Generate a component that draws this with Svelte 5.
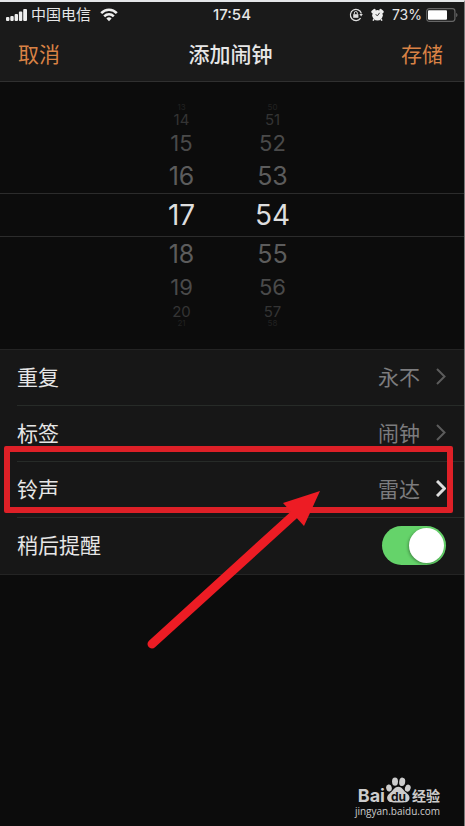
<script lang="ts">
  const depths = ["edge", "far", "mid", "near", "current", "near", "mid", "far", "edge"];

  let hour = $state(17);
  let minute = $state(54);
  let snooze = $state(true);

  const rows = [
    { label: "重复", value: "永不" },
    { label: "标签", value: "闹钟" },
    { label: "铃声", value: "雷达", marked: true },
  ];

  function around(value: number, count: number) {
    return depths.map((depth, i) => ({
      depth,
      n: (value + i - 4 + count) % count,
    }));
  }

  const hours = $derived(around(hour, 24));
  const minutes = $derived(around(minute, 60));
</script>

<div class="screen">
  <header>
    <div class="status">
      <div class="carrier">
        <svg width="22" height="14" viewBox="0 0 22 14" fill="#eee" aria-hidden="true">
          <rect x="0" y="9" width="3.4" height="4" rx="1" />
          <rect x="4.3" y="8" width="3.4" height="5" rx="1" />
          <rect x="8.600" y="6" width="3.4" height="7" rx="1" />
          <rect x="12.9" y="3.500" width="3.4" height="9.500" rx="1" />
          <rect x="17.2" y="1" width="3.800" height="12" rx="1" />
        </svg>
        <span>中国电信</span>
        <svg class="wifi" width="18" height="14" viewBox="0 0 18 14" fill="none" stroke="#eee" stroke-width="2.5" aria-hidden="true">
          <path d="M1.2 5.2C5.5.6 12.5.6 16.8 5.2" />
          <path d="M4.2 8.4c2.7-2.8 6.9-2.8 9.6 0" />
          <path d="M6.4 10.4c1.5-1.5 3.7-1.5 5.2 0L9 13.2z" fill="#eee" stroke="none" />
        </svg>
      </div>
      <span class="clock">17:54</span>
      <div class="indicators">
        <svg width="14" height="14" viewBox="0 0 14 14" fill="none" stroke="#ddd" aria-hidden="true">
          <path d="M11.6 10.2A5.6 5.6 0 1 1 12.4 5.5" stroke-width="1.2" />
          <path d="M10.4 6h3.4l-1.7 2.6z" fill="#ddd" stroke="none" />
          <rect x="4.2" y="6.2" width="5.2" height="3.6" fill="#ddd" stroke="none" />
          <path d="M5.3 6.3V5a1.5 1.5 0 0 1 3 0v1.3" />
        </svg>
        <svg width="13" height="14" viewBox="0 0 13 14" aria-hidden="true">
          <path d="M1.6 3.800L3.400 2.200M11.400 3.800L9.600 2.200" stroke="#eee" stroke-width="2.600" stroke-linecap="round" />
          <circle cx="6.5" cy="7.2" r="5.300" fill="#eee" />
          <path d="M3 11.2l-1 1.400M10 11.2l1 1.400" stroke="#eee" stroke-width="1.6" />
          <path d="M4.600 6.600l2 1L8.600 4.800" fill="none" stroke="#333" stroke-width="1" />
        </svg>
        <span>73%</span>
        <svg width="32" height="14" viewBox="0 0 32 14" aria-hidden="true">
          <rect x=".7" y=".7" width="28.2" height="12.6" rx="2.5" fill="none" stroke="#666" stroke-width="1.2" />
          <rect x="2" y="2.2" width="19" height="9.6" rx="1" fill="#fff" />
          <path d="M30.300 5v4c1.4-.4 1.4-3.6 0-4z" fill="#777" />
        </svg>
      </div>
    </div>
    <nav>
      <button class="action">取消</button>
      <h1>添加闹钟</h1>
      <button class="action save">存储</button>
    </nav>
  </header>

  <section class="picker" aria-label="时间">
    <div class="wheel">
      {#each hours as h, i}
        <div class="line {h.depth}">
          <button onclick={() => (hour = h.n)}>{String(h.n).padStart(2, "0")}</button>
          <button onclick={() => (minute = minutes[i].n)}>{String(minutes[i].n).padStart(2, "0")}</button>
        </div>
      {/each}
    </div>
  </section>

  <ul>
    {#each rows as row}
      <li>
        <button class="row" class:marked={row.marked}>
          <span>{row.label}</span>
          <span class="value">{row.value}</span>
          <svg class="chevron" width="10" height="17" viewBox="0 0 10 17" fill="none" stroke="currentColor" aria-hidden="true">
            <path d="M1 1l7.5 7.5L1 16" />
          </svg>
        </button>
        {#if row.marked}
          <div class="frame"></div>
          <svg class="arrow" width="180" height="164" viewBox="0 0 180 164" aria-hidden="true">
            <path d="M8 156L152 25" stroke="#ed1c24" stroke-width="9" stroke-linecap="round" />
            <path d="M139 15L176 3L160 38Z" fill="#ed1c24" />
          </svg>
        {/if}
      </li>
    {/each}
    <li>
      <label class="row">
        <span>稍后提醒</span>
        <input type="checkbox" role="switch" bind:checked={snooze} />
      </label>
    </li>
  </ul>

  <footer>
    <div class="brand">
      <span class="bai">Bai</span>
      <span class="paw">
        <svg width="25" height="26" viewBox="0 0 25 26" aria-hidden="true">
          <g fill="#ccc">
            <ellipse cx="3" cy="11" rx="2.8" ry="3.6" transform="rotate(-12 3 11)" />
            <ellipse cx="9" cy="4.600" rx="3" ry="4.2" />
            <ellipse cx="16.2" cy="4.800" rx="3" ry="4.2" transform="rotate(8 16.2 4.800)" />
            <ellipse cx="21.8" cy="11.2" rx="2.8" ry="3.6" transform="rotate(18 21.8 11.2)" />
            <path d="M12.3 9.800c3.400 0 4.600 3 6.800 4.900 2.600 2.300 5.200 4 4.300 7.400-1 3.800-4.800 3.400-11 3.400S2.400 25.900 1.300 22.100c-.9-3.400 1.700-5.100 4.200-7.400 2.200-1.900 3.400-4.900 6.800-4.900z" />
          </g>
        </svg>
        <span class="du">du</span>
      </span>
      <span class="jing">经验</span>
    </div>
    <div class="url">jingyan.baidu.com</div>
  </footer>
</div>

<style>
  :global(body) {
    background: #0c0c0c;
  }
  .screen {
    box-sizing: border-box;
    display: flex;
    flex-direction: column;
    min-height: 100vh;
    border-top: 2px solid #e4e6e8;
    border-right: 1px solid #777;
    background: #0c0c0c;
    color: #e6e6e6;
    font-family: Inter, "Noto Sans CJK SC", sans-serif;
    font-size: 21px;
  }
  button {
    padding: 0;
    border: none;
    background: none;
    color: inherit;
    font: inherit;
    cursor: pointer;
  }
  header {
    background: #1a1a1a;
    border-bottom: 1px solid #303030;
  }
  .status {
    display: grid;
    grid-template-columns: 1fr auto 1fr;
    align-items: center;
    height: 26px;
    padding: 0 6px;
    font-size: 15px;
    line-height: 24px;
  }
  .carrier,
  .indicators {
    display: flex;
    align-items: center;
  }
  .carrier {
    gap: 3px;
  }
  .wifi {
    margin-left: 6px;
  }
  .clock {
    font-weight: 500;
  }
  .indicators {
    justify-content: flex-end;
    gap: 8px;
  }
  .indicators span {
    margin-right: -4px;
    font-size: 14px;
  }
  nav {
    box-sizing: border-box;
    display: grid;
    grid-template-columns: 1fr auto 1fr;
    align-items: center;
    height: 53px;
    padding: 0 21px 4px 18px;
  }
  .action {
    justify-self: start;
    color: #d98245;
  }
  .save {
    justify-self: end;
  }
  h1 {
    margin: 0;
    font-size: 21px;
    font-weight: 500;
  }
  .picker {
    padding: 21px 0 22px;
  }
  .line {
    display: grid;
    grid-template-columns: 60px 60px;
    justify-content: center;
    align-items: center;
    gap: 31px;
    padding-right: 10px;
  }
  .line button {
    line-height: 1;
  }
  .current {
    height: 42px;
    border-top: 1px solid #2c2c2c;
    border-bottom: 1px solid #2c2c2c;
    color: #dedede;
    font-size: 28px;
  }
  .near {
    height: 34px;
    color: #5c5c5c;
    font-size: 25px;
  }
  .mid {
    height: 32px;
    color: #4a4a4a;
    font-size: 22px;
  }
  .far {
    height: 16px;
    color: #343434;
    font-size: 15px;
  }
  .edge {
    height: 8px;
    color: #222;
    font-size: 8px;
  }
  ul {
    margin: 0;
    padding: 0;
    list-style: none;
    background: #171717;
    border-top: 1px solid #242424;
    border-bottom: 1px solid #242424;
  }
  li {
    position: relative;
    padding-left: 17px;
  }
  .row {
    box-sizing: border-box;
    display: flex;
    align-items: center;
    width: 100%;
    height: 56px;
    padding: 0 18px 2px 0;
    text-align: left;
  }
  .row span {
    padding-bottom: 2px;
  }
  li:not(:last-child) .row {
    border-bottom: 1px solid #272b28;
  }
  .value {
    margin-left: auto;
    color: #7c7c7e;
  }
  .chevron {
    margin-left: 16px;
    color: #5c5c5c;
    stroke-width: 2;
  }
  .marked .chevron {
    color: #dedede;
    stroke-width: 3;
  }
  .frame {
    position: absolute;
    inset: -16px 11px 5px 4px;
    border: 6px solid #de2027;
    border-radius: 2px;
    pointer-events: none;
  }
  .arrow {
    position: absolute;
    z-index: 1;
    top: 26px;
    right: 140px;
    pointer-events: none;
  }
  input {
    appearance: none;
    display: flex;
    width: 64px;
    height: 39px;
    margin: 0 0 0 auto;
    padding: 2px;
    box-sizing: border-box;
    border-radius: 20px;
    background: #3a3a3c;
  }
  input::before {
    content: "";
    width: 35px;
    height: 35px;
    border-radius: 50%;
    background: #fff;
    box-shadow: -1px 1px 3px #0005;
  }
  input:checked {
    justify-content: flex-end;
    background: #65d36a;
  }
  footer {
    align-self: flex-end;
    margin-top: auto;
    padding: 0 24px 9px 0;
    color: #ccc;
  }
  .brand {
    display: flex;
    justify-content: flex-end;
    align-items: flex-end;
    gap: 1px;
    line-height: 18px;
  }
  .bai {
    font-size: 18px;
    font-weight: 700;
  }
  .paw {
    position: relative;
    display: flex;
    padding-bottom: 2px;
  }
  .du {
    position: absolute;
    inset: auto 0 2px;
    color: #111;
    font-size: 12px;
    font-weight: 700;
    line-height: 12px;
    text-align: center;
  }
  .jing {
    font-size: 14px;
    font-weight: 700;
  }
  .url {
    font-family: "Open Sans", sans-serif;
    font-size: 10px;
    line-height: 12px;
  }
</style>
